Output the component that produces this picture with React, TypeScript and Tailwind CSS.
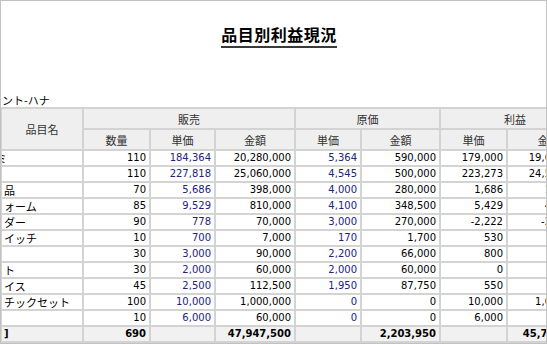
import React from "react";

type Row = {
  name: string;
  clip?: boolean;
  q: string;
  su: string;
  sa: string;
  cu: string;
  ca: string;
  pu: string;
  pa: string;
};

const rows: Row[] = [
  { name: "ミ", clip: true, q: "110", su: "184,364", sa: "20,280,000", cu: "5,364", ca: "590,000", pu: "179,000", pa: "19,690,000" },
  { name: "", q: "110", su: "227,818", sa: "25,060,000", cu: "4,545", ca: "500,000", pu: "223,273", pa: "24,560,000" },
  { name: "品", q: "70", su: "5,686", sa: "398,000", cu: "4,000", ca: "280,000", pu: "1,686", pa: "118,000" },
  { name: "ォーム", q: "85", su: "9,529", sa: "810,000", cu: "4,100", ca: "348,500", pu: "5,429", pa: "461,500" },
  { name: "ダー", q: "90", su: "778", sa: "70,000", cu: "3,000", ca: "270,000", pu: "-2,222", pa: "-200,000" },
  { name: "イッチ", q: "10", su: "700", sa: "7,000", cu: "170", ca: "1,700", pu: "530", pa: "5,300" },
  { name: "", q: "30", su: "3,000", sa: "90,000", cu: "2,200", ca: "66,000", pu: "800", pa: "24,000" },
  { name: "ト", q: "30", su: "2,000", sa: "60,000", cu: "2,000", ca: "60,000", pu: "0", pa: "0" },
  { name: "イス", q: "45", su: "2,500", sa: "112,500", cu: "1,950", ca: "87,750", pu: "550", pa: "24,750" },
  { name: "チックセット", q: "100", su: "10,000", sa: "1,000,000", cu: "0", ca: "0", pu: "10,000", pa: "1,000,000" },
  { name: "", q: "10", su: "6,000", sa: "60,000", cu: "0", ca: "0", pu: "6,000", pa: "60,000" },
];

const td = "border-2 border-[#d3d3d3] h-[16px] p-0 pr-[3px] text-right leading-[12px] whitespace-nowrap overflow-hidden";
const th = "border-2 border-[#d3d3d3] bg-[#efefef] p-0 font-normal text-center text-[#333] leading-[12px] whitespace-nowrap";
const navy = "text-[#22227e]";
const jp = { fontFamily: '"Noto Sans CJK JP", sans-serif', fontSize: "11px" };

export default function App() {
  return (
    <div
      className="w-[547px] h-[344px] border border-[#c2c2c2] bg-white overflow-hidden flex flex-col"
      style={{ fontFamily: '"DejaVu Sans", "Noto Sans CJK JP", sans-serif' }}
    >
      <div className="flex justify-center pl-[11px] pt-[24px]">
        <span
          className="text-[16px] font-bold leading-[18px] pb-[3px] border-b-2 border-[#3a3a3a] text-black tracking-[0.5px]"
          style={{ fontFamily: '"Noto Sans CJK JP", sans-serif' }}
        >
          品目別利益現況
        </span>
      </div>
      <div
        className="mt-[46px] h-[13px] leading-[13px] text-[11px] text-black pl-[1px] whitespace-nowrap"
        style={{ fontFamily: '"Noto Sans CJK JP", sans-serif' }}
      >
        ント-ハナ
      </div>
      <div className="overflow-hidden">
        <table className="border-collapse table-fixed w-[589px] text-[10px] text-black -ml-[1px]">
          <colgroup>
            <col className="w-[82px]" />
            <col className="w-[67px]" />
            <col className="w-[65px]" />
            <col className="w-[80px]" />
            <col className="w-[66px]" />
            <col className="w-[79px]" />
            <col className="w-[67px]" />
            <col className="w-[83px]" />
          </colgroup>
          <thead>
            <tr className="h-[21px]">
              <th rowSpan={2} className={th} style={jp}>
                品目名
              </th>
              <th colSpan={3} className={th} style={jp}>販売</th>
              <th colSpan={2} className={th} style={jp}>原価</th>
              <th colSpan={2} className={th} style={jp}>利益</th>
            </tr>
            <tr className="h-[21px]">
              {["数量", "単価", "金額", "単価", "金額", "単価", "金額"].map((t, i) => (
                <th key={i} className={th} style={jp}>
                  {t}
                </th>
              ))}
            </tr>
          </thead>
          <tbody>
            {rows.map((r, i) => (
              <tr key={i} className="h-[16px]">
                <td className="border-2 border-[#d3d3d3] h-[16px] p-0 text-left leading-[12px] whitespace-nowrap overflow-hidden">
                  <div className="overflow-hidden text-[11px]" style={{ fontFamily: '"Noto Sans CJK JP", sans-serif' }}>
                    {r.clip ? <span className="inline-block -ml-[6px]">{r.name}</span> : <span className="pl-[2px]">{r.name}</span>}
                  </div>
                </td>
                <td className={td}>{r.q}</td>
                <td className={`${td} ${navy}`}>{r.su}</td>
                <td className={td}>{r.sa}</td>
                <td className={`${td} ${navy}`}>{r.cu}</td>
                <td className={td}>{r.ca}</td>
                <td className={td}>{r.pu}</td>
                <td className={td}>{r.pa}</td>
              </tr>
            ))}
            <tr className="h-[16px] bg-[#f1f1f1] font-bold">
              <td className="border-2 border-[#d3d3d3] h-[16px] p-0 pl-[2px] text-left leading-[12px]">]</td>
              <td className={td}>690</td>
              <td className={td}></td>
              <td className={td}>47,947,500</td>
              <td className={td}></td>
              <td className={td}>2,203,950</td>
              <td className={td}></td>
              <td className={td}>45,743,550</td>
            </tr>
          </tbody>
        </table>
      </div>
    </div>
  );
}
